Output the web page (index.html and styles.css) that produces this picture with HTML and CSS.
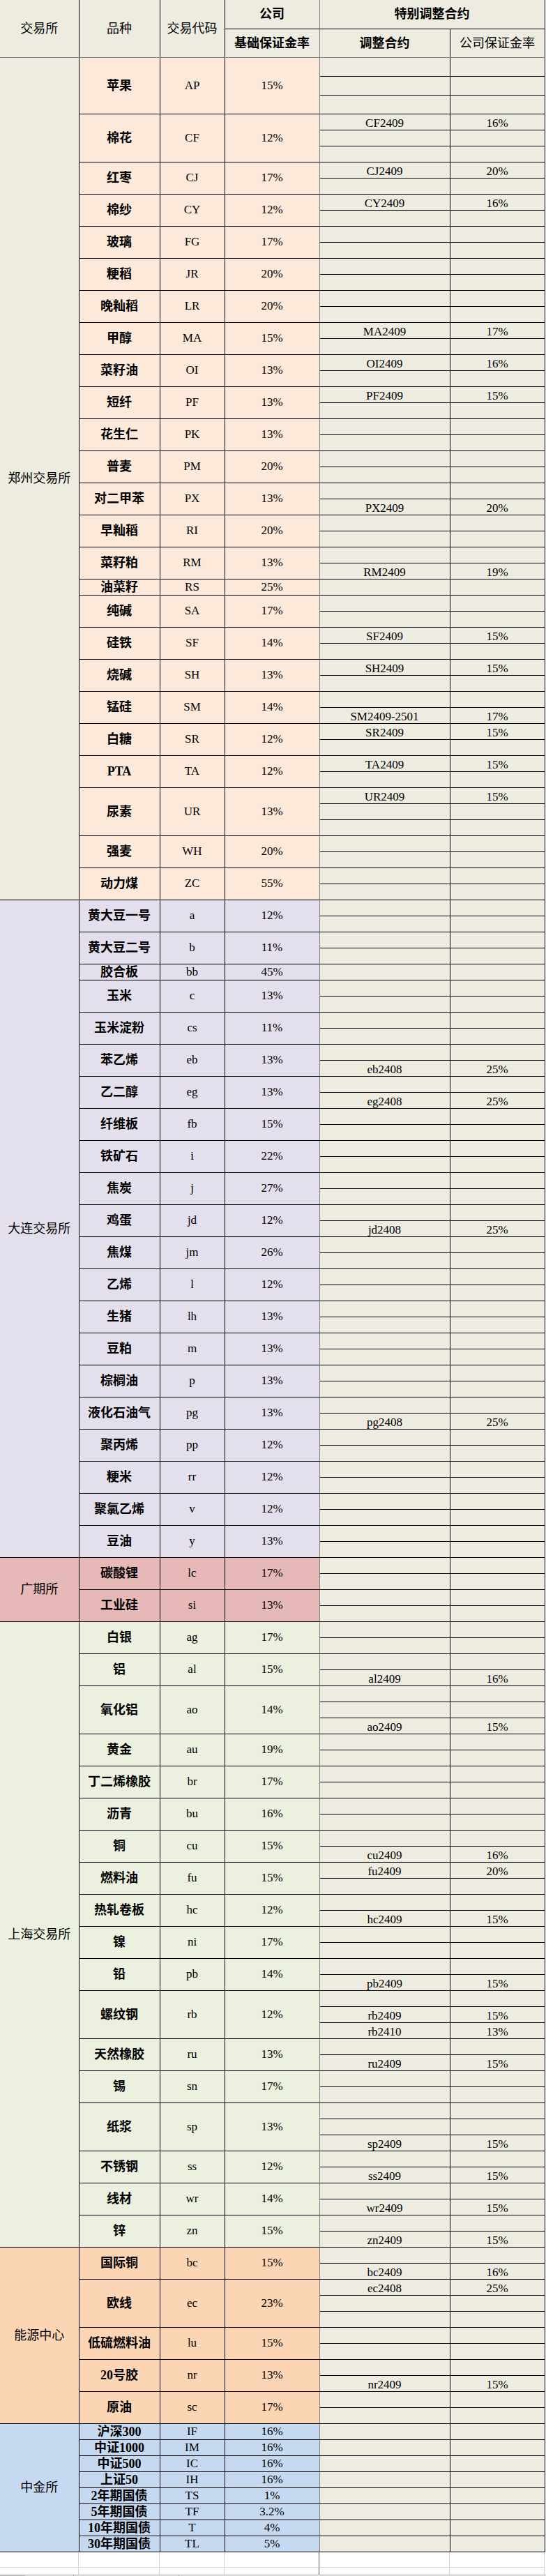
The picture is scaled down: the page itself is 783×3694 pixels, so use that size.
FILE: index.html
```html
<!DOCTYPE html>
<html lang="zh-CN">
<head>
<meta charset="utf-8">
<title>保证金率</title>
<link rel="stylesheet" href="styles.css">
</head>
<body>
<table class="sheet">
<colgroup><col class="c1"><col class="c2"><col class="c3"><col class="c4"><col class="c5"><col class="c6"></colgroup>
<thead>
<tr><th rowspan="2" class="hx">交易所</th><th rowspan="2">品种</th><th rowspan="2">交易代码</th><th class="hb">公司</th><th colspan="2" class="hb">特别调整合约</th></tr>
<tr><th class="hb">基础保证金率</th><th class="hb">调整合约</th><th>公司保证金率</th></tr>
</thead>
<tbody class="zz">
<tr class="tall"><td class="ex" rowspan="52">郑州交易所</td><td class="nm" rowspan="3">苹果</td><td class="cd" rowspan="3">AP</td><td class="rt" rowspan="3">15%</td><td class="ct"></td><td class="cr"></td></tr>
<tr class="tall"><td class="ct"></td><td class="cr"></td></tr>
<tr class="tall"><td class="ct"></td><td class="cr"></td></tr>
<tr><td class="nm" rowspan="3">棉花</td><td class="cd" rowspan="3">CF</td><td class="rt" rowspan="3">12%</td><td class="ct">CF2409</td><td class="cr">16%</td></tr>
<tr><td class="ct"></td><td class="cr"></td></tr>
<tr><td class="ct"></td><td class="cr"></td></tr>
<tr><td class="nm" rowspan="2">红枣</td><td class="cd" rowspan="2">CJ</td><td class="rt" rowspan="2">17%</td><td class="ct">CJ2409</td><td class="cr">20%</td></tr>
<tr><td class="ct"></td><td class="cr"></td></tr>
<tr><td class="nm" rowspan="2">棉纱</td><td class="cd" rowspan="2">CY</td><td class="rt" rowspan="2">12%</td><td class="ct">CY2409</td><td class="cr">16%</td></tr>
<tr><td class="ct"></td><td class="cr"></td></tr>
<tr><td class="nm" rowspan="2">玻璃</td><td class="cd" rowspan="2">FG</td><td class="rt" rowspan="2">17%</td><td class="ct"></td><td class="cr"></td></tr>
<tr><td class="ct"></td><td class="cr"></td></tr>
<tr><td class="nm" rowspan="2">粳稻</td><td class="cd" rowspan="2">JR</td><td class="rt" rowspan="2">20%</td><td class="ct"></td><td class="cr"></td></tr>
<tr><td class="ct"></td><td class="cr"></td></tr>
<tr><td class="nm" rowspan="2">晚籼稻</td><td class="cd" rowspan="2">LR</td><td class="rt" rowspan="2">20%</td><td class="ct"></td><td class="cr"></td></tr>
<tr><td class="ct"></td><td class="cr"></td></tr>
<tr><td class="nm" rowspan="2">甲醇</td><td class="cd" rowspan="2">MA</td><td class="rt" rowspan="2">15%</td><td class="ct">MA2409</td><td class="cr">17%</td></tr>
<tr><td class="ct"></td><td class="cr"></td></tr>
<tr><td class="nm" rowspan="2">菜籽油</td><td class="cd" rowspan="2">OI</td><td class="rt" rowspan="2">13%</td><td class="ct">OI2409</td><td class="cr">16%</td></tr>
<tr><td class="ct"></td><td class="cr"></td></tr>
<tr><td class="nm" rowspan="2">短纤</td><td class="cd" rowspan="2">PF</td><td class="rt" rowspan="2">13%</td><td class="ct">PF2409</td><td class="cr">15%</td></tr>
<tr><td class="ct"></td><td class="cr"></td></tr>
<tr><td class="nm" rowspan="2">花生仁</td><td class="cd" rowspan="2">PK</td><td class="rt" rowspan="2">13%</td><td class="ct"></td><td class="cr"></td></tr>
<tr><td class="ct"></td><td class="cr"></td></tr>
<tr><td class="nm" rowspan="2">普麦</td><td class="cd" rowspan="2">PM</td><td class="rt" rowspan="2">20%</td><td class="ct"></td><td class="cr"></td></tr>
<tr><td class="ct"></td><td class="cr"></td></tr>
<tr><td class="nm" rowspan="2">对二甲苯</td><td class="cd" rowspan="2">PX</td><td class="rt" rowspan="2">13%</td><td class="ct"></td><td class="cr"></td></tr>
<tr><td class="ct">PX2409</td><td class="cr">20%</td></tr>
<tr><td class="nm" rowspan="2">早籼稻</td><td class="cd" rowspan="2">RI</td><td class="rt" rowspan="2">20%</td><td class="ct"></td><td class="cr"></td></tr>
<tr><td class="ct"></td><td class="cr"></td></tr>
<tr><td class="nm" rowspan="2">菜籽粕</td><td class="cd" rowspan="2">RM</td><td class="rt" rowspan="2">13%</td><td class="ct"></td><td class="cr"></td></tr>
<tr><td class="ct">RM2409</td><td class="cr">19%</td></tr>
<tr><td class="nm">油菜籽</td><td class="cd">RS</td><td class="rt">25%</td><td class="ct"></td><td class="cr"></td></tr>
<tr><td class="nm" rowspan="2">纯碱</td><td class="cd" rowspan="2">SA</td><td class="rt" rowspan="2">17%</td><td class="ct"></td><td class="cr"></td></tr>
<tr><td class="ct"></td><td class="cr"></td></tr>
<tr><td class="nm" rowspan="2">硅铁</td><td class="cd" rowspan="2">SF</td><td class="rt" rowspan="2">14%</td><td class="ct">SF2409</td><td class="cr">15%</td></tr>
<tr><td class="ct"></td><td class="cr"></td></tr>
<tr><td class="nm" rowspan="2">烧碱</td><td class="cd" rowspan="2">SH</td><td class="rt" rowspan="2">13%</td><td class="ct">SH2409</td><td class="cr">15%</td></tr>
<tr><td class="ct"></td><td class="cr"></td></tr>
<tr><td class="nm" rowspan="2">锰硅</td><td class="cd" rowspan="2">SM</td><td class="rt" rowspan="2">14%</td><td class="ct"></td><td class="cr"></td></tr>
<tr><td class="ct">SM2409-2501</td><td class="cr">17%</td></tr>
<tr><td class="nm" rowspan="2">白糖</td><td class="cd" rowspan="2">SR</td><td class="rt" rowspan="2">12%</td><td class="ct">SR2409</td><td class="cr">15%</td></tr>
<tr><td class="ct"></td><td class="cr"></td></tr>
<tr><td class="nm" rowspan="2">PTA</td><td class="cd" rowspan="2">TA</td><td class="rt" rowspan="2">12%</td><td class="ct">TA2409</td><td class="cr">15%</td></tr>
<tr><td class="ct"></td><td class="cr"></td></tr>
<tr><td class="nm" rowspan="3">尿素</td><td class="cd" rowspan="3">UR</td><td class="rt" rowspan="3">13%</td><td class="ct">UR2409</td><td class="cr">15%</td></tr>
<tr><td class="ct"></td><td class="cr"></td></tr>
<tr><td class="ct"></td><td class="cr"></td></tr>
<tr><td class="nm" rowspan="2">强麦</td><td class="cd" rowspan="2">WH</td><td class="rt" rowspan="2">20%</td><td class="ct"></td><td class="cr"></td></tr>
<tr><td class="ct"></td><td class="cr"></td></tr>
<tr><td class="nm" rowspan="2">动力煤</td><td class="cd" rowspan="2">ZC</td><td class="rt" rowspan="2">55%</td><td class="ct"></td><td class="cr"></td></tr>
<tr><td class="ct"></td><td class="cr"></td></tr>
</tbody>
<tbody class="dl">
<tr><td class="ex" rowspan="41">大连交易所</td><td class="nm" rowspan="2">黄大豆一号</td><td class="cd" rowspan="2">a</td><td class="rt" rowspan="2">12%</td><td class="ct"></td><td class="cr"></td></tr>
<tr><td class="ct"></td><td class="cr"></td></tr>
<tr><td class="nm" rowspan="2">黄大豆二号</td><td class="cd" rowspan="2">b</td><td class="rt" rowspan="2">11%</td><td class="ct"></td><td class="cr"></td></tr>
<tr><td class="ct"></td><td class="cr"></td></tr>
<tr><td class="nm">胶合板</td><td class="cd">bb</td><td class="rt">45%</td><td class="ct"></td><td class="cr"></td></tr>
<tr><td class="nm" rowspan="2">玉米</td><td class="cd" rowspan="2">c</td><td class="rt" rowspan="2">13%</td><td class="ct"></td><td class="cr"></td></tr>
<tr><td class="ct"></td><td class="cr"></td></tr>
<tr><td class="nm" rowspan="2">玉米淀粉</td><td class="cd" rowspan="2">cs</td><td class="rt" rowspan="2">11%</td><td class="ct"></td><td class="cr"></td></tr>
<tr><td class="ct"></td><td class="cr"></td></tr>
<tr><td class="nm" rowspan="2">苯乙烯</td><td class="cd" rowspan="2">eb</td><td class="rt" rowspan="2">13%</td><td class="ct"></td><td class="cr"></td></tr>
<tr><td class="ct">eb2408</td><td class="cr">25%</td></tr>
<tr><td class="nm" rowspan="2">乙二醇</td><td class="cd" rowspan="2">eg</td><td class="rt" rowspan="2">13%</td><td class="ct"></td><td class="cr"></td></tr>
<tr><td class="ct">eg2408</td><td class="cr">25%</td></tr>
<tr><td class="nm" rowspan="2">纤维板</td><td class="cd" rowspan="2">fb</td><td class="rt" rowspan="2">15%</td><td class="ct"></td><td class="cr"></td></tr>
<tr><td class="ct"></td><td class="cr"></td></tr>
<tr><td class="nm" rowspan="2">铁矿石</td><td class="cd" rowspan="2">i</td><td class="rt" rowspan="2">22%</td><td class="ct"></td><td class="cr"></td></tr>
<tr><td class="ct"></td><td class="cr"></td></tr>
<tr><td class="nm" rowspan="2">焦炭</td><td class="cd" rowspan="2">j</td><td class="rt" rowspan="2">27%</td><td class="ct"></td><td class="cr"></td></tr>
<tr><td class="ct"></td><td class="cr"></td></tr>
<tr><td class="nm" rowspan="2">鸡蛋</td><td class="cd" rowspan="2">jd</td><td class="rt" rowspan="2">12%</td><td class="ct"></td><td class="cr"></td></tr>
<tr><td class="ct">jd2408</td><td class="cr">25%</td></tr>
<tr><td class="nm" rowspan="2">焦煤</td><td class="cd" rowspan="2">jm</td><td class="rt" rowspan="2">26%</td><td class="ct"></td><td class="cr"></td></tr>
<tr><td class="ct"></td><td class="cr"></td></tr>
<tr><td class="nm" rowspan="2">乙烯</td><td class="cd" rowspan="2">l</td><td class="rt" rowspan="2">12%</td><td class="ct"></td><td class="cr"></td></tr>
<tr><td class="ct"></td><td class="cr"></td></tr>
<tr><td class="nm" rowspan="2">生猪</td><td class="cd" rowspan="2">lh</td><td class="rt" rowspan="2">13%</td><td class="ct"></td><td class="cr"></td></tr>
<tr><td class="ct"></td><td class="cr"></td></tr>
<tr><td class="nm" rowspan="2">豆粕</td><td class="cd" rowspan="2">m</td><td class="rt" rowspan="2">13%</td><td class="ct"></td><td class="cr"></td></tr>
<tr><td class="ct"></td><td class="cr"></td></tr>
<tr><td class="nm" rowspan="2">棕榈油</td><td class="cd" rowspan="2">p</td><td class="rt" rowspan="2">13%</td><td class="ct"></td><td class="cr"></td></tr>
<tr><td class="ct"></td><td class="cr"></td></tr>
<tr><td class="nm" rowspan="2">液化石油气</td><td class="cd" rowspan="2">pg</td><td class="rt" rowspan="2">13%</td><td class="ct"></td><td class="cr"></td></tr>
<tr><td class="ct">pg2408</td><td class="cr">25%</td></tr>
<tr><td class="nm" rowspan="2">聚丙烯</td><td class="cd" rowspan="2">pp</td><td class="rt" rowspan="2">12%</td><td class="ct"></td><td class="cr"></td></tr>
<tr><td class="ct"></td><td class="cr"></td></tr>
<tr><td class="nm" rowspan="2">粳米</td><td class="cd" rowspan="2">rr</td><td class="rt" rowspan="2">12%</td><td class="ct"></td><td class="cr"></td></tr>
<tr><td class="ct"></td><td class="cr"></td></tr>
<tr><td class="nm" rowspan="2">聚氯乙烯</td><td class="cd" rowspan="2">v</td><td class="rt" rowspan="2">12%</td><td class="ct"></td><td class="cr"></td></tr>
<tr><td class="ct"></td><td class="cr"></td></tr>
<tr><td class="nm" rowspan="2">豆油</td><td class="cd" rowspan="2">y</td><td class="rt" rowspan="2">13%</td><td class="ct"></td><td class="cr"></td></tr>
<tr><td class="ct"></td><td class="cr"></td></tr>
</tbody>
<tbody class="gq">
<tr><td class="ex" rowspan="4">广期所</td><td class="nm" rowspan="2">碳酸锂</td><td class="cd" rowspan="2">lc</td><td class="rt" rowspan="2">17%</td><td class="ct"></td><td class="cr"></td></tr>
<tr><td class="ct"></td><td class="cr"></td></tr>
<tr><td class="nm" rowspan="2">工业硅</td><td class="cd" rowspan="2">si</td><td class="rt" rowspan="2">13%</td><td class="ct"></td><td class="cr"></td></tr>
<tr><td class="ct"></td><td class="cr"></td></tr>
</tbody>
<tbody class="sh">
<tr><td class="ex" rowspan="39">上海交易所</td><td class="nm" rowspan="2">白银</td><td class="cd" rowspan="2">ag</td><td class="rt" rowspan="2">17%</td><td class="ct"></td><td class="cr"></td></tr>
<tr><td class="ct"></td><td class="cr"></td></tr>
<tr><td class="nm" rowspan="2">铝</td><td class="cd" rowspan="2">al</td><td class="rt" rowspan="2">15%</td><td class="ct"></td><td class="cr"></td></tr>
<tr><td class="ct">al2409</td><td class="cr">16%</td></tr>
<tr><td class="nm" rowspan="3">氧化铝</td><td class="cd" rowspan="3">ao</td><td class="rt" rowspan="3">14%</td><td class="ct"></td><td class="cr"></td></tr>
<tr><td class="ct"></td><td class="cr"></td></tr>
<tr><td class="ct">ao2409</td><td class="cr">15%</td></tr>
<tr><td class="nm" rowspan="2">黄金</td><td class="cd" rowspan="2">au</td><td class="rt" rowspan="2">19%</td><td class="ct"></td><td class="cr"></td></tr>
<tr><td class="ct"></td><td class="cr"></td></tr>
<tr><td class="nm" rowspan="2">丁二烯橡胶</td><td class="cd" rowspan="2">br</td><td class="rt" rowspan="2">17%</td><td class="ct"></td><td class="cr"></td></tr>
<tr><td class="ct"></td><td class="cr"></td></tr>
<tr><td class="nm" rowspan="2">沥青</td><td class="cd" rowspan="2">bu</td><td class="rt" rowspan="2">16%</td><td class="ct"></td><td class="cr"></td></tr>
<tr><td class="ct"></td><td class="cr"></td></tr>
<tr><td class="nm" rowspan="2">铜</td><td class="cd" rowspan="2">cu</td><td class="rt" rowspan="2">15%</td><td class="ct"></td><td class="cr"></td></tr>
<tr><td class="ct">cu2409</td><td class="cr">16%</td></tr>
<tr><td class="nm" rowspan="2">燃料油</td><td class="cd" rowspan="2">fu</td><td class="rt" rowspan="2">15%</td><td class="ct">fu2409</td><td class="cr">20%</td></tr>
<tr><td class="ct"></td><td class="cr"></td></tr>
<tr><td class="nm" rowspan="2">热轧卷板</td><td class="cd" rowspan="2">hc</td><td class="rt" rowspan="2">12%</td><td class="ct"></td><td class="cr"></td></tr>
<tr><td class="ct">hc2409</td><td class="cr">15%</td></tr>
<tr><td class="nm" rowspan="2">镍</td><td class="cd" rowspan="2">ni</td><td class="rt" rowspan="2">17%</td><td class="ct"></td><td class="cr"></td></tr>
<tr><td class="ct"></td><td class="cr"></td></tr>
<tr><td class="nm" rowspan="2">铅</td><td class="cd" rowspan="2">pb</td><td class="rt" rowspan="2">14%</td><td class="ct"></td><td class="cr"></td></tr>
<tr><td class="ct">pb2409</td><td class="cr">15%</td></tr>
<tr><td class="nm" rowspan="3">螺纹钢</td><td class="cd" rowspan="3">rb</td><td class="rt" rowspan="3">12%</td><td class="ct"></td><td class="cr"></td></tr>
<tr><td class="ct">rb2409</td><td class="cr">15%</td></tr>
<tr><td class="ct">rb2410</td><td class="cr">13%</td></tr>
<tr><td class="nm" rowspan="2">天然橡胶</td><td class="cd" rowspan="2">ru</td><td class="rt" rowspan="2">13%</td><td class="ct"></td><td class="cr"></td></tr>
<tr><td class="ct">ru2409</td><td class="cr">15%</td></tr>
<tr><td class="nm" rowspan="2">锡</td><td class="cd" rowspan="2">sn</td><td class="rt" rowspan="2">17%</td><td class="ct"></td><td class="cr"></td></tr>
<tr><td class="ct"></td><td class="cr"></td></tr>
<tr><td class="nm" rowspan="3">纸浆</td><td class="cd" rowspan="3">sp</td><td class="rt" rowspan="3">13%</td><td class="ct"></td><td class="cr"></td></tr>
<tr><td class="ct"></td><td class="cr"></td></tr>
<tr><td class="ct">sp2409</td><td class="cr">15%</td></tr>
<tr><td class="nm" rowspan="2">不锈钢</td><td class="cd" rowspan="2">ss</td><td class="rt" rowspan="2">12%</td><td class="ct"></td><td class="cr"></td></tr>
<tr><td class="ct">ss2409</td><td class="cr">15%</td></tr>
<tr><td class="nm" rowspan="2">线材</td><td class="cd" rowspan="2">wr</td><td class="rt" rowspan="2">14%</td><td class="ct"></td><td class="cr"></td></tr>
<tr><td class="ct">wr2409</td><td class="cr">15%</td></tr>
<tr><td class="nm" rowspan="2">锌</td><td class="cd" rowspan="2">zn</td><td class="rt" rowspan="2">15%</td><td class="ct"></td><td class="cr"></td></tr>
<tr><td class="ct">zn2409</td><td class="cr">15%</td></tr>
</tbody>
<tbody class="ny">
<tr><td class="ex" rowspan="11">能源中心</td><td class="nm" rowspan="2">国际铜</td><td class="cd" rowspan="2">bc</td><td class="rt" rowspan="2">15%</td><td class="ct"></td><td class="cr"></td></tr>
<tr><td class="ct">bc2409</td><td class="cr">16%</td></tr>
<tr><td class="nm" rowspan="3">欧线</td><td class="cd" rowspan="3">ec</td><td class="rt" rowspan="3">23%</td><td class="ct">ec2408</td><td class="cr">25%</td></tr>
<tr><td class="ct"></td><td class="cr"></td></tr>
<tr><td class="ct"></td><td class="cr"></td></tr>
<tr><td class="nm" rowspan="2">低硫燃料油</td><td class="cd" rowspan="2">lu</td><td class="rt" rowspan="2">15%</td><td class="ct"></td><td class="cr"></td></tr>
<tr><td class="ct"></td><td class="cr"></td></tr>
<tr><td class="nm" rowspan="2">20号胶</td><td class="cd" rowspan="2">nr</td><td class="rt" rowspan="2">13%</td><td class="ct"></td><td class="cr"></td></tr>
<tr><td class="ct">nr2409</td><td class="cr">15%</td></tr>
<tr><td class="nm" rowspan="2">原油</td><td class="cd" rowspan="2">sc</td><td class="rt" rowspan="2">17%</td><td class="ct"></td><td class="cr"></td></tr>
<tr><td class="ct"></td><td class="cr"></td></tr>
</tbody>
<tbody class="zj">
<tr><td class="ex" rowspan="8">中金所</td><td class="nm">沪深300</td><td class="cd">IF</td><td class="rt">16%</td><td class="ct"></td><td class="cr"></td></tr>
<tr><td class="nm">中证1000</td><td class="cd">IM</td><td class="rt">16%</td><td class="ct"></td><td class="cr"></td></tr>
<tr><td class="nm">中证500</td><td class="cd">IC</td><td class="rt">16%</td><td class="ct"></td><td class="cr"></td></tr>
<tr><td class="nm">上证50</td><td class="cd">IH</td><td class="rt">16%</td><td class="ct"></td><td class="cr"></td></tr>
<tr><td class="nm">2年期国债</td><td class="cd">TS</td><td class="rt">1%</td><td class="ct"></td><td class="cr"></td></tr>
<tr><td class="nm">5年期国债</td><td class="cd">TF</td><td class="rt">3.2%</td><td class="ct"></td><td class="cr"></td></tr>
<tr><td class="nm">10年期国债</td><td class="cd">T</td><td class="rt">4%</td><td class="ct"></td><td class="cr"></td></tr>
<tr><td class="nm">30年期国债</td><td class="cd">TL</td><td class="rt">5%</td><td class="ct"></td><td class="cr"></td></tr>
</tbody>
</table>
<div class="tail">
<span></span><span></span><span></span><span class="dk"></span><span></span><span></span>
<span class="short"></span><span class="short"></span><span class="short"></span><span class="short dk"></span><span class="short"></span><span class="short"></span>
</div>
<div class="tabs"><span class="tab-a"></span><span class="tab-b"></span><span class="tab-c"></span></div>
</body>
</html>
```
FILE: styles.css
```css
html, body {
  margin: 0;
  padding: 0;
  background: #ffffff;
}

body {
  width: 783px;
  font-family: "Liberation Serif", "Noto Sans CJK SC", serif;
  color: #000;
}

.sheet {
  border-collapse: collapse;
  table-layout: fixed;
  width: 781px;
}

.c1 { width: 113px; }
.c2 { width: 116px; }
.c3 { width: 93px; }
.c4 { width: 136px; }
.c5 { width: 187px; }
.c6 { width: 136px; }

.sheet th,
.sheet td {
  border: 1px solid #000;
  padding: 0;
  text-align: center;
  vertical-align: middle;
  font-size: 17px;
  font-weight: normal;
  line-height: 20px;
  overflow: hidden;
  white-space: nowrap;
}

.sheet thead tr { height: 41px; }

.sheet th {
  background: #eeece1;
  font-size: 18px;
  border-top: none;
  border-bottom-color: #808080;
}

.sheet th.hx { border-left: none; }
.sheet th.hb { font-weight: bold; }
.sheet thead tr:first-child th.hb { border-bottom-color: #000; }
.sheet thead tr:first-child th:nth-child(4) { border-right-color: #808080; }
.sheet thead tr:last-child th:first-child { border-right-color: #808080; }

.sheet tbody tr { height: 23px; }
.sheet tbody tr.tall { height: 27px; }

.sheet tbody.zz tr:first-child td { border-top-color: #808080; }

.ex {
  font-size: 18px !important;
  border-left: none !important;
}

.nm {
  font-size: 18px !important;
  font-weight: bold !important;
}

.rt { border-right-color: #808080 !important; }

.ct,
.cr {
  background: #eeece1;
  vertical-align: bottom !important;
  line-height: 18px !important;
}

.ct { border-left-color: #808080 !important; }

.zz .ex { background: #eeece1; }
.zz .nm, .zz .cd, .zz .rt { background: #fde9d9; }

.dl .ex, .dl .nm, .dl .cd, .dl .rt { background: #e4dfec; }

.gq .ex, .gq .nm, .gq .cd, .gq .rt { background: #e6b8b7; }

.sh .ex, .sh .nm, .sh .cd, .sh .rt { background: #ebf1de; }

.ny .ex, .ny .nm, .ny .cd, .ny .rt { background: #fcd5b4; }

.zj .ex, .zj .nm, .zj .cd, .zj .rt { background: #c5d9f1; }

.tail {
  display: grid;
  grid-template-columns: 113px 116px 93px 136px 187px 136px;
  grid-template-rows: 22px 10px;
  width: 781px;
}

.tail span {
  border-right: 1px solid #d4d4d4;
  border-bottom: 1px solid #d4d4d4;
}

.tail span.short { border-bottom: none; }
.tail span.dk { border-right-color: #555; }

.tabs {
  display: flex;
  height: 2px;
  border-top: 1px solid #b4b4b4;
  background: #e6e6e6;
}

.tab-a { width: 36px; background: #bdbdbd; }
.tab-b { width: 69px; }
.tab-c { width: 150px; border-left: 1px solid #a0a0a0; border-right: 1px solid #a0a0a0; }
```
